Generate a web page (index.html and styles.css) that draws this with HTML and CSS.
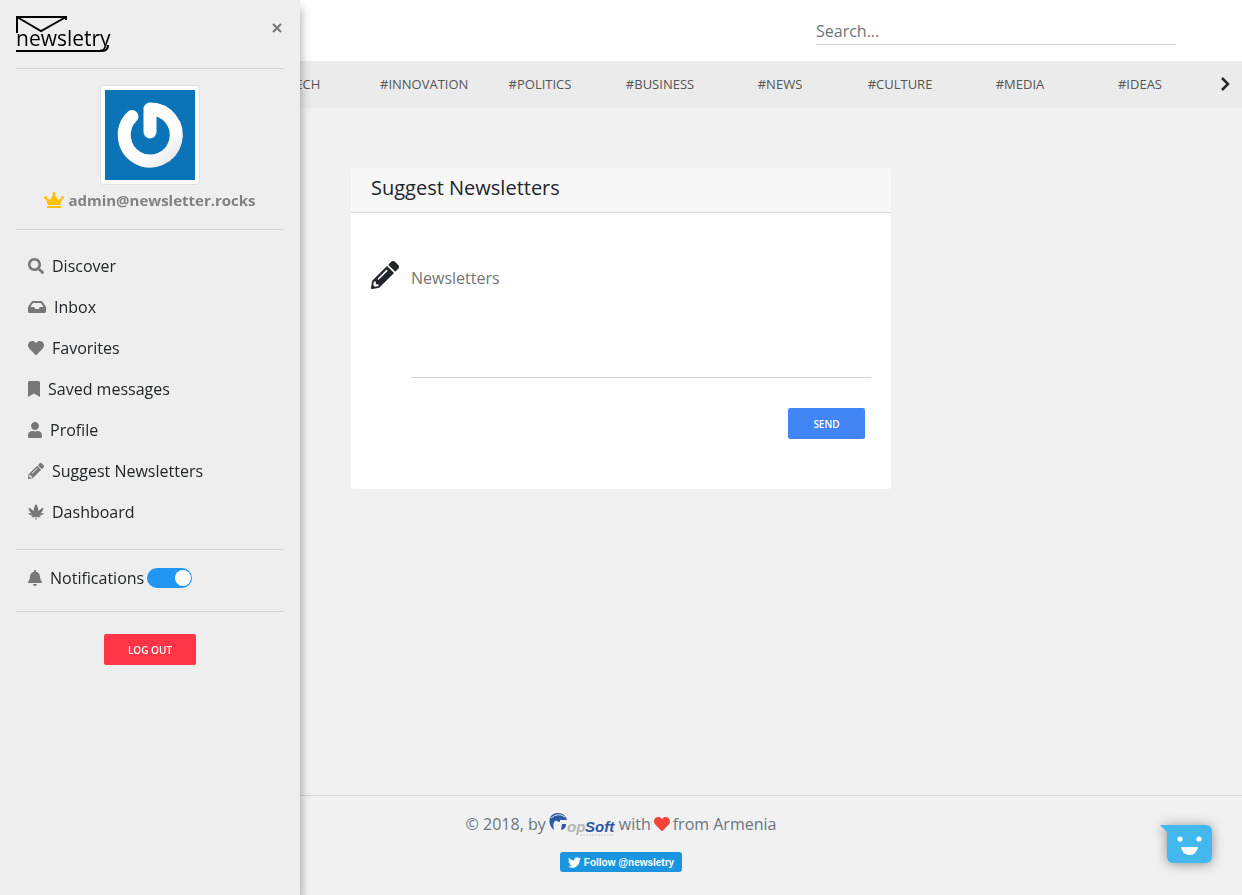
FILE: index.html
```html
<!DOCTYPE html>
<html lang="en">
<head>
    <meta charset="UTF-8">
    <meta name="viewport" content="width=device-width, initial-scale=1.0">
    <title>Newsletry - Suggest Newsletters</title>
    <link rel="stylesheet" href="styles.css">
</head>
<body>
    <aside class="sidebar">
        <div class="sidebar-top">
            <a href="#" class="logo" aria-label="newsletry">
                <svg width="98" height="37" viewBox="0 0 98 37">
                    <path d="M1 17V1h49v3M1 1l24 14L50 1M0 35h86q6 0 6-6" fill="none" stroke="#000" stroke-width="2"/>
                    <text x="0" y="30" class="logo-text">newsletry</text>
                </svg>
            </a>
            <button type="button" class="close" aria-label="Close menu">
                <svg width="12" height="12" viewBox="0 0 12 12"><path d="M2 2l8 8M10 2l-8 8" stroke="#777" stroke-width="2"/></svg>
            </button>
        </div>

        <div class="user">
            <svg class="avatar" viewBox="0 0 90 90">
                <defs>
                    <linearGradient id="shade" x1="0" y1="0" x2="1" y2="1">
                        <stop offset="0.7" stop-color="#fff"/>
                        <stop offset="1" stop-color="#e4e4e4"/>
                    </linearGradient>
                </defs>
                <rect width="90" height="90" fill="#0b74b8"/>
                <path d="M27 26.500A26 26 0 1 0 45 19V42" fill="none" stroke="url(#shade)" stroke-width="13" stroke-linecap="round" stroke-linejoin="round"/>
            </svg>
            <div class="email">
                <svg class="crown" width="20" height="16" viewBox="0 0 640 512"><path d="M528 448H112c-8.800 0-16 7.200-16 16v32c0 8.800 7.200 16 16 16h416c8.800 0 16-7.200 16-16v-32c0-8.800-7.200-16-16-16zm64-320c-26.500 0-48 21.500-48 48 0 7.100 1.600 13.700 4.400 19.800L476 239.200c-15.400 9.200-35.300 4-44.200-11.600L350.300 85C361 76.200 368 63 368 48c0-26.500-21.500-48-48-48s-48 21.500-48 48c0 15 7 28.200 17.700 37l-81.500 142.600c-8.900 15.600-28.900 20.800-44.200 11.600l-72.300-43.400c2.700-6 4.400-12.700 4.400-19.800 0-26.500-21.500-48-48-48S0 149.500 0 176s21.500 48 48 48c2.600 0 5.200-.4 7.700-.8L128 416h384l72.300-192.800c2.500.4 5.100.8 7.700.8 26.500 0 48-21.500 48-48s-21.500-48-48-48z"/></svg>
                <span>admin@newsletter.rocks</span>
            </div>
        </div>

        <nav class="menu">
            <a href="#"><svg width="16" height="16" viewBox="0 0 512 512"><path d="M505 442.700L405.300 343c-4.500-4.500-10.600-7-17-7H372c27.600-35.300 44-79.700 44-128C416 93.100 322.900 0 208 0S0 93.100 0 208s93.100 208 208 208c48.300 0 92.700-16.400 128-44v16.300c0 6.400 2.500 12.500 7 17l99.700 99.700c9.400 9.400 24.600 9.400 33.900 0l28.300-28.300c9.400-9.400 9.400-24.600.1-34zM208 336c-70.700 0-128-57.200-128-128 0-70.700 57.200-128 128-128 70.700 0 128 57.200 128 128 0 70.700-57.200 128-128 128z"/></svg>Discover</a>
            <a href="#"><svg width="18" height="16" viewBox="0 0 576 512"><path d="M567.938 243.908L462.250 85.374A48.003 48.003 0 0 0 422.311 64H153.689a48 48 0 0 0-39.938 21.374L8.062 243.908A47.994 47.994 0 0 0 0 270.533V400c0 26.510 21.490 48 48 48h480c26.510 0 48-21.490 48-48V270.533a47.994 47.994 0 0 0-8.062-26.625zM162.252 128h251.497l85.333 128H376l-32 64H232l-32-64H76.918l85.334-128z"/></svg>Inbox</a>
            <a href="#"><svg width="16" height="16" viewBox="0 0 512 512"><path d="M462.300 62.600C407.500 15.900 326 24.300 275.700 76.200L256 96.500l-19.700-20.300C186.100 24.300 104.500 15.900 49.700 62.600c-62.800 53.600-66.100 149.800-9.900 207.900l193.500 199.800c12.500 12.900 32.800 12.900 45.300 0l193.500-199.800c56.300-58.100 53-154.300-9.800-207.900z"/></svg>Favorites</a>
            <a href="#"><svg width="12" height="16" viewBox="0 0 384 512"><path d="M0 512V48C0 21.490 21.490 0 48 0h288c26.510 0 48 21.490 48 48v464L192 400 0 512z"/></svg>Saved messages</a>
            <a href="#"><svg width="14" height="16" viewBox="0 0 448 512"><path d="M224 256c70.700 0 128-57.300 128-128S294.700 0 224 0 96 57.300 96 128s57.300 128 128 128zm89.600 32h-16.700c-22.200 10.200-46.900 16-72.900 16s-50.600-5.800-72.900-16h-16.700C60.200 288 0 348.200 0 422.400V464c0 26.500 21.500 48 48 48h352c26.500 0 48-21.500 48-48v-41.600c0-74.200-60.200-134.400-134.400-134.400z"/></svg>Profile</a>
            <a href="#"><svg width="16" height="16" viewBox="0 0 512 512"><path d="M497.900 142.100l-46.100 46.100c-4.700 4.700-12.300 4.700-17 0l-111-111c-4.700-4.700-4.700-12.300 0-17l46.100-46.100c18.700-18.700 49.100-18.700 67.900 0l60.100 60.100c18.800 18.700 18.800 49.100 0 67.900zM284.200 99.800L21.600 362.400.4 483.900c-2.900 16.400 11.400 30.600 27.800 27.800l121.500-21.300 262.600-262.600c4.700-4.700 4.700-12.300 0-17l-111-111c-4.800-4.700-12.400-4.700-17.100 0zM124.100 339.900c-5.500-5.500-5.500-14.300 0-19.800l154-154c5.500-5.500 14.300-5.500 19.800 0s5.500 14.300 0 19.800l-154 154c-5.500 5.500-14.300 5.500-19.800 0zM88 424h48v36.300l-64.500 11.300-31.100-31.100L51.700 376H88v48z"/></svg>Suggest Newsletters</a>
            <a href="#"><svg width="16" height="16" viewBox="0 0 512 512"><path d="M256 0c-42 56-72 118-72 180 0 18 2 34 6 50-46-54-106-92-176-114 10 72 46 140 102 186-40-8-78-6-116 8 44 38 96 58 150 62-20 12-36 28-46 50 48 8 92 0 136-24v98c0 9 7 16 16 16s16-7 16-16v-98c44 24 88 32 136 24-10-22-26-38-46-50 54-4 106-24 150-62-38-14-76-16-116-8 56-46 92-114 102-186-70 22-130 60-176 114 4-16 6-32 6-50C328 118 298 56 256 0z"/></svg>Dashboard</a>
        </nav>

        <div class="notifications">
            <svg width="14" height="16" viewBox="0 0 448 512"><path d="M224 512c35.320 0 63.970-28.650 63.970-64H160.030c0 35.350 28.650 64 63.970 64zm215.390-149.710c-19.320-20.760-55.470-51.990-55.470-154.290 0-77.700-54.480-139.900-127.940-155.160V32c0-17.670-14.320-32-31.980-32s-31.980 14.330-31.980 32v20.840C118.560 68.100 64.080 130.300 64.080 208c0 102.300-36.150 133.530-55.470 154.290-6 6.450-8.660 14.160-8.610 21.710.11 16.400 12.980 32 32.100 32h383.800c19.120 0 32-15.600 32.100-32 .05-7.550-2.610-15.270-8.610-21.710z"/></svg>
            <label for="notify">Notifications</label>
            <input type="checkbox" id="notify" class="switch" checked>
        </div>

        <button type="button" class="btn btn-logout">LOG OUT</button>
    </aside>

    <header class="header">
        <input type="search" class="search" placeholder="Search..." aria-label="Search">
    </header>

    <nav class="tags">
        <div class="tag-list">
            <a href="#">#TECH</a>
            <a href="#">#INNOVATION</a>
            <a href="#">#POLITICS</a>
            <a href="#">#BUSINESS</a>
            <a href="#">#NEWS</a>
            <a href="#">#CULTURE</a>
            <a href="#">#MEDIA</a>
            <a href="#">#IDEAS</a>
        </div>
        <button type="button" class="next" aria-label="Next tags">
            <svg width="10" height="14" viewBox="0 0 10 14"><path d="M2 1l6 6-6 6" fill="none" stroke="#212529" stroke-width="2.500"/></svg>
        </button>
    </nav>

    <main class="content">
        <form class="card">
            <h1 class="card-header">Suggest Newsletters</h1>
            <div class="card-body">
                <div class="field">
                    <svg width="28" height="28" viewBox="0 0 512 512"><path d="M497.900 142.100l-46.100 46.100c-4.700 4.700-12.300 4.700-17 0l-111-111c-4.700-4.700-4.700-12.300 0-17l46.100-46.100c18.700-18.700 49.100-18.700 67.900 0l60.100 60.100c18.800 18.700 18.800 49.100 0 67.900zM284.200 99.800L21.600 362.400.4 483.900c-2.900 16.400 11.400 30.600 27.800 27.800l121.500-21.300 262.600-262.600c4.700-4.700 4.700-12.300 0-17l-111-111c-4.800-4.700-12.400-4.700-17.100 0zM124.100 339.900c-5.500-5.500-5.500-14.300 0-19.800l154-154c5.500-5.500 14.300-5.500 19.800 0s5.500 14.300 0 19.800l-154 154c-5.500 5.500-14.300 5.500-19.800 0zM88 424h48v36.300l-64.500 11.300-31.100-31.100L51.700 376H88v48z"/></svg>
                    <textarea placeholder="Newsletters" aria-label="Newsletters"></textarea>
                </div>
                <button type="submit" class="btn btn-send">SEND</button>
            </div>
        </form>
    </main>

    <footer class="footer">
        <div class="copyright">
            <span>© 2018, by</span>
            <a href="#" aria-label="TopSoft">
                <svg width="67" height="24" viewBox="0 0 67 24">
                    <path d="M5 18C-2 13-1 1 9 1c5 0 8 3 9 7h-7v2c-2 0-3-2-5-1-2 2-2 5-1 9z" fill="#2b57a5"/>
                    <path d="M2 6q7-6 14-1" fill="none" stroke="#d5e0f2" stroke-width="1"/>
                    <path d="M13 12h4c0 3-1 5-5 6z" fill="#2b57a5"/>
                    <text x="18" y="20" class="brand-gray">op</text>
                    <text x="36" y="20" class="brand-blue">Soft</text>
                    <path d="M31 23h34" stroke="#c4c6ca" stroke-width="1" stroke-dasharray="2 1"/>
                </svg>
            </a>
            <span>with</span>
            <svg width="16" height="16" viewBox="0 0 512 512" fill="#f44336"><path d="M462.300 62.600C407.500 15.900 326 24.300 275.700 76.200L256 96.500l-19.700-20.300C186.100 24.300 104.500 15.900 49.700 62.600c-62.800 53.600-66.100 149.800-9.900 207.900l193.500 199.800c12.500 12.900 32.800 12.900 45.300 0l193.500-199.800c56.300-58.100 53-154.300-9.800-207.900z"/></svg>
            <span>from Armenia</span>
        </div>
        <a href="#" class="follow">
            <svg width="13" height="13" viewBox="0 0 24 24"><path d="M23.954 4.569c-.885.389-1.830.654-2.825.775 1.014-.611 1.794-1.574 2.163-2.723-.951.555-2.005.959-3.127 1.184-.896-.959-2.173-1.559-3.591-1.559-2.717 0-4.920 2.203-4.920 4.917 0 .39.045.765.127 1.124C7.691 8.094 4.066 6.130 1.640 3.161c-.427.722-.666 1.561-.666 2.475 0 1.710.87 3.213 2.188 4.096-.807-.026-1.566-.248-2.228-.616v.061c0 2.385 1.693 4.374 3.946 4.827-.413.111-.849.171-1.296.171-.314 0-.615-.03-.916-.086.631 1.953 2.445 3.377 4.604 3.417-1.680 1.319-3.809 2.105-6.102 2.105-.39 0-.779-.023-1.170-.067 2.189 1.394 4.768 2.209 7.557 2.209 9.054 0 13.999-7.496 13.999-13.986 0-.209 0-.42-.015-.63.961-.689 1.800-1.560 2.460-2.548l-.047-.02z"/></svg>
            Follow @newsletry
        </a>
    </footer>

    <button type="button" class="chat" aria-label="Open chat">
        <svg width="52" height="38" viewBox="0 0 52 38">
            <path d="M0 0h46a6 6 0 0 1 6 6v26a6 6 0 0 1-6 6H13a6 6 0 0 1-6-6V7z" fill="#42b8ee"/>
            <circle cx="20" cy="14" r="2.600" fill="#fff"/>
            <circle cx="39" cy="14" r="2.600" fill="#fff"/>
            <path d="M21 22h17c-1 5-4 8-8.500 8S22 27 21 22z" fill="#fff"/>
        </svg>
    </button>
</body>
</html>
```

FILE: styles.css
```css
* {
    box-sizing: border-box;
}

body {
    display: flex;
    flex-direction: column;
    min-height: 100vh;
    margin: 0;
    font-family: "Open Sans", sans-serif;
    font-size: 16px;
    line-height: 24px;
    color: #212529;
    background-color: #f1f1f1;
}

a {
    color: inherit;
    text-decoration: none;
}

button {
    padding: 0;
    border: 0;
    background: none;
    font-family: inherit;
    cursor: pointer;
}

svg {
    display: block;
    flex-shrink: 0;
}

/* Slide-out menu, lies over the page */
.sidebar {
    position: fixed;
    top: 0;
    left: 0;
    bottom: 0;
    z-index: 10;
    width: 300px;
    padding: 16px;
    overflow: hidden auto;
    background-color: #eee;
    box-shadow: 0 8px 10px rgba(0, 0, 0, 0.4);
}

.sidebar-top {
    display: flex;
    justify-content: space-between;
    align-items: flex-start;
    padding-bottom: 15px;
    border-bottom: 1px solid #d5d5d5;
}

.close {
    padding: 6px 1px;
}

.logo-text {
    font-family: "Open Sans", sans-serif;
    font-size: 21px;
}

.user {
    display: flex;
    flex-direction: column;
    align-items: center;
    padding: 16px 0;
    border-bottom: 1px solid #d5d5d5;
}

.avatar {
    width: 100px;
    height: 100px;
    padding: 4px;
    border: 1px solid #dee2e6;
    border-radius: 4px;
    background-color: #fff;
}

.email {
    display: flex;
    align-items: center;
    gap: 4px;
    padding: 3px 0 1px;
    font-size: 15px;
    font-weight: 700;
    color: #818181;
}

.crown {
    fill: #ffc107;
}

.menu {
    padding: 15px 0 17px;
    border-bottom: 1px solid #d5d5d5;
}

.menu a {
    display: flex;
    align-items: center;
    gap: 8px;
    height: 41px;
    padding-left: 12px;
}

.menu svg,
.notifications svg {
    fill: #777;
}

.notifications {
    display: flex;
    align-items: center;
    height: 62px;
    padding: 0 0 6px 12px;
    border-bottom: 1px solid #d5d5d5;
}

.notifications label {
    margin: 0 3px 0 8px;
}

.switch {
    appearance: none;
    display: flex;
    align-items: center;
    width: 45px;
    height: 20px;
    margin: 0;
    padding: 0 1px;
    border-radius: 10px;
    background-color: #ccc;
    cursor: pointer;
}

.switch::before {
    content: "";
    width: 16px;
    height: 16px;
    border-radius: 50%;
    background-color: #fff;
}

.switch:checked {
    justify-content: flex-end;
    background-color: #2196f3;
}

.btn {
    display: block;
    height: 31px;
    border-radius: 2px;
    font-size: 10px;
    font-weight: 600;
    color: #fff;
}

.btn-logout {
    width: 92px;
    margin: 22px auto 0;
    background-color: #ff3547;
}

.btn-send {
    width: 77px;
    margin: 30px 6px 0 auto;
    background-color: #4285f4;
}

.header {
    display: flex;
    justify-content: flex-end;
    padding: 16px 66px;
    background-color: #fff;
}

.search {
    width: 360px;
    height: 29px;
    padding: 2px 0 0;
    border: 0;
    border-bottom: 1px solid #ced4da;
    font: inherit;
    outline: none;
}

.search::placeholder {
    color: #6c757d;
    opacity: 1;
}

.tags {
    display: flex;
    justify-content: flex-end;
    align-items: center;
    height: 47px;
    padding-bottom: 1px;
    background-color: #ebebeb;
}

.tag-list {
    display: grid;
    grid-template-columns: repeat(8, 120px);
}

.tag-list a {
    padding: 0 20px;
    font-size: 13px;
    text-align: center;
    color: #555;
}

.next {
    display: flex;
    justify-content: center;
    width: 42px;
    padding-left: 8px;
}

.content {
    flex: 1;
    padding: 60px 20px;
}

.card {
    max-width: 540px;
    margin: 0 auto;
    border-radius: 4px;
    background-color: #fff;
    overflow: hidden;
}

.card-header {
    margin: 0;
    padding: 8px 20px 12px;
    border-bottom: 1px solid #d9d9d9;
    background-color: #f7f7f7;
    font-size: 20px;
    line-height: 24px;
    font-weight: 400;
}

.card-body {
    padding: 48px 20px 50px;
}

.field {
    display: flex;
    gap: 12px;
}

.field svg {
    fill: #212529;
}

textarea {
    flex: 1;
    height: 117px;
    padding: 5px 0;
    border: 0;
    border-bottom: 1px solid #ced4da;
    font: inherit;
    resize: none;
    outline: none;
}

textarea::placeholder {
    color: #757575;
}

.footer {
    display: flex;
    flex-direction: column;
    align-items: center;
    gap: 16px;
    padding: 16px 0 23px;
    border-top: 1px solid #d5d5d5;
    color: #6c757d;
}

.copyright {
    display: flex;
    align-items: center;
    gap: 3px;
}

.brand-gray,
.brand-blue {
    font: italic 700 15px "Liberation Sans", sans-serif;
    fill: #b4b6ba;
}

.brand-blue {
    fill: #2b57a5;
}

.follow {
    display: flex;
    align-items: center;
    gap: 3px;
    height: 20px;
    padding: 0 8px;
    border-radius: 3px;
    background-color: #1b95e0;
    font: bold 10px "Liberation Sans", sans-serif;
    color: #fff;
}

.follow svg {
    fill: #fff;
}

/* Chat bubble floating over the page */
.chat {
    position: fixed;
    right: 30px;
    bottom: 32px;
    filter: drop-shadow(0 1px 6px rgba(0, 0, 0, 0.4));
}
```
